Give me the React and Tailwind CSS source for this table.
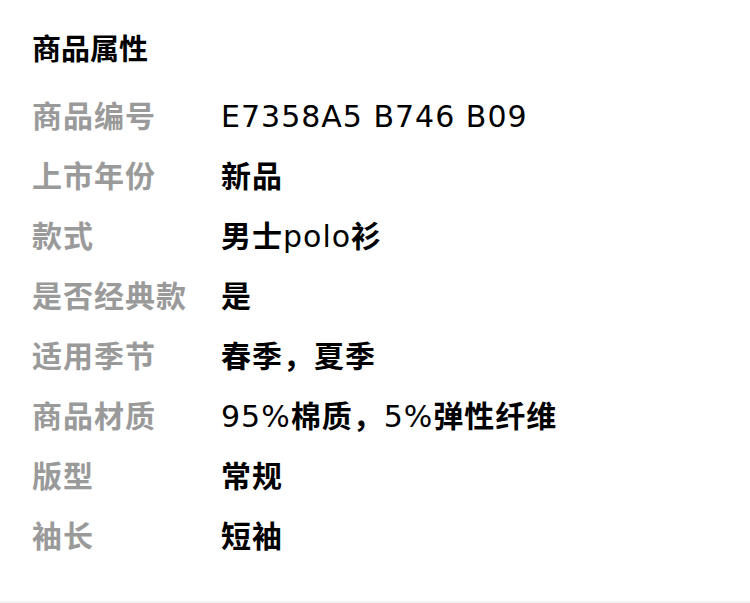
const rows = [
  ["商品编号", "E7358A5 B746 B09"],
  ["上市年份", "新品"],
  ["款式", "男士polo衫"],
  ["是否经典款", "是"],
  ["适用季节", "春季，夏季"],
  ["商品材质", "95%棉质，5%弹性纤维"],
  ["版型", "常规"],
  ["袖长", "短袖"],
];

// latin runs stay at book weight, CJK runs go bold like the screenshot
function Value({ text }) {
  const parts = text.match(/[\x00-\x7f]+|[^\x00-\x7f]+/g) || [];
  return (
    <span className="text-black">
      {parts.map((p, i) =>
        /^[\x00-\x7f]/.test(p) ? (
          <span key={i} className="font-medium">{p}</span>
        ) : (
          <span key={i} className="font-bold">{p}</span>
        )
      )}
    </span>
  );
}

export default function App() {
  return (
    <div
      className="flex h-[603px] w-[750px] flex-col bg-white"
      style={{ fontFamily: '"DejaVu Sans", "Noto Sans CJK SC", sans-serif' }}
    >
      <div className="flex-1 px-8 pt-[31px]">
        <h2 className="h-[38px] text-[29px] font-bold leading-[38px] text-black">商品属性</h2>
        <div className="mt-[18px] flex flex-col">
          {rows.map(([label, value]) => (
            <div key={label} className="flex h-[60px] items-center text-[30px] leading-none tracking-[1px]">
              <span className="w-[189px] shrink-0 font-bold text-[#9a9a9a]">{label}</span>
              <Value text={value} />
            </div>
          ))}
        </div>
      </div>
      <div className="h-[2px] bg-[#f2f2f2]" />
    </div>
  );
}
